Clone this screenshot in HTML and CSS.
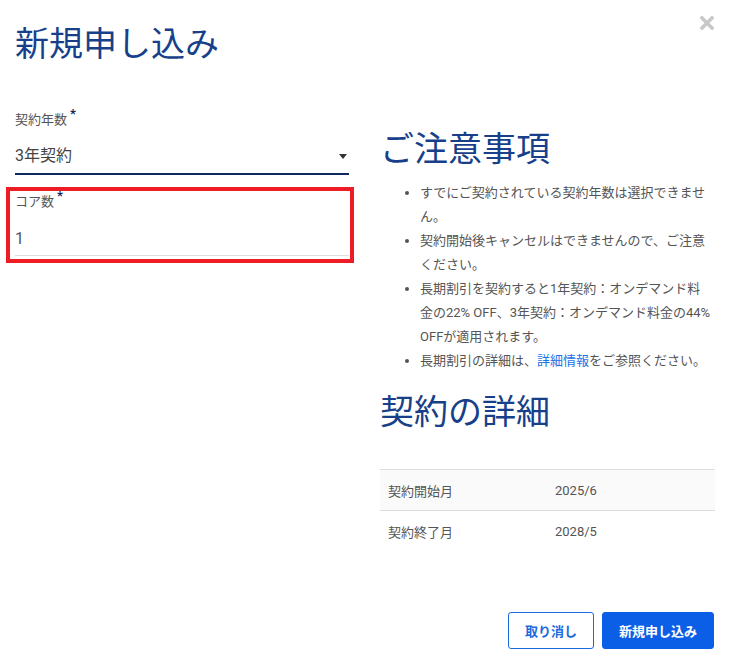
FILE: index.html
```html
<!DOCTYPE html>
<html lang="ja">
<head>
<meta charset="utf-8">
<title>新規申し込み</title>
<link rel="stylesheet" href="styles.css">
</head>
<body>
<div class="modal">
  <button class="close" aria-label="閉じる">
    <svg width="14" height="14" viewBox="0 0 14 14"><path d="M2 2 L12 12 M12 2 L2 12" stroke="#c8c8c8" stroke-width="3.6" stroke-linecap="square"/></svg>
  </button>
  <h1 class="title">新規申し込み</h1>
  <div class="body">
    <div class="left">
      <div class="field">
        <label class="label">契約年数<span class="req">*</span></label>
        <div class="select"><span>3年契約</span><span class="arrow"></span></div>
      </div>
      <div class="highlight">
        <div class="field">
          <label class="label">コア数<span class="req">*</span></label>
          <div class="input">1</div>
        </div>
      </div>
    </div>
    <div class="right">
      <h2 class="heading">ご注意事項</h2>
      <ul class="notes">
        <li>すでにご契約されている契約年数は選択できません。</li>
        <li>契約開始後キャンセルはできませんので、ご注意ください。</li>
        <li>長期割引を契約すると1年契約：オンデマンド料金の22% OFF、3年契約：オンデマンド料金の44% OFFが適用されます。</li>
        <li>長期割引の詳細は、<a class="link" href="#">詳細情報</a>をご参照ください。</li>
      </ul>
      <h2 class="heading heading-detail">契約の詳細</h2>
      <table class="details">
        <tr class="odd"><td class="key">契約開始月</td><td>2025/6</td></tr>
        <tr><td class="key">契約終了月</td><td>2028/5</td></tr>
      </table>
    </div>
  </div>
  <div class="footer">
    <button class="btn btn-outline">取り消し</button>
    <button class="btn btn-primary">新規申し込み</button>
  </div>
</div>
</body>
</html>
```

FILE: styles.css
```css
* { box-sizing: border-box; }
html, body { margin: 0; padding: 0; background: #fff; }
body {
  font-family: Roboto, "Noto Sans CJK JP", sans-serif;
  color: #555;
}
.modal {
  position: relative;
  width: 730px;
  height: 663px;
  padding: 0 15px 14px 15px;
  display: flex;
  flex-direction: column;
}
.close {
  position: absolute;
  top: 16px;
  left: 700px;
  width: 14px;
  height: 14px;
  padding: 0;
  border: 0;
  background: none;
  display: block;
}
.close svg { display: block; }
.title {
  margin: 24px 0 0 0;
  font-size: 34px;
  line-height: 40px;
  font-weight: 400;
  color: #173f8a;
}
.body {
  margin-top: 47px;
  display: flex;
  gap: 31px;
}
.left { width: 334px; flex: none; }
.right { flex: 1; margin-top: 18px; }
.label {
  display: block;
  font-size: 13px;
  line-height: 18px;
  color: #555;
}
.req {
  color: #0e2a5c;
  font-weight: 700;
  font-size: 13px;
  margin-left: 3px;
  vertical-align: 6px;
  line-height: 0;
}
.select {
  margin-top: 15px;
  font-size: 16px;
  line-height: 24px;
  padding-bottom: 5px;
  border-bottom: 2px solid #0e2a5c;
  color: #444;
  display: flex;
  justify-content: space-between;
  align-items: center;
}
.arrow {
  width: 0;
  height: 0;
  border-left: 4px solid transparent;
  border-right: 4px solid transparent;
  border-top: 5px solid #333;
  margin-right: 2px;
}
.highlight {
  margin: 12px -5px 0 -9px;
  border: 4px solid #ee1c25;
  padding: 2px 1px 3px 5px;
}
.input {
  margin-top: 16px;
  font-size: 16px;
  line-height: 24px;
  padding-bottom: 4px;
  border-bottom: 1px solid #ddd;
  color: #555;
}
.heading {
  margin: 0;
  font-size: 34px;
  line-height: 40px;
  font-weight: 400;
  color: #173f8a;
}
.heading-detail { margin-top: 19px; }
.notes {
  margin: 12px 0 0 0;
  padding: 0 3px 0 40px;
  font-size: 13px;
  line-height: 24px;
  color: #555;
}
.link { color: #1a73e8; text-decoration: none; }
.details {
  margin-top: 37px;
  width: 100%;
  border-collapse: collapse;
  font-size: 13px;
  color: #555;
}
.details tr { border-top: 1px solid #ddd; }
.details tr.odd { background: #fafafa; border-bottom: 1px solid #ddd; }
.details td { height: 41px; padding: 0 8px; }
.details td.key { width: 167px; }
.footer {
  margin-top: auto;
  display: flex;
  justify-content: flex-end;
  gap: 8px;
  padding-right: 1px;
}
.btn {
  height: 37px;
  padding: 0 16px;
  border-radius: 3px;
  font-family: Roboto, "Noto Sans CJK JP", sans-serif;
  font-size: 13px;
  font-weight: 700;
}
.btn-outline {
  background: #fff;
  border: 1px solid #1a6be0;
  color: #1a6be0;
}
.btn-primary {
  background: #0b5ee6;
  border: 1px solid #0b5ee6;
  color: #fff;
}
```
